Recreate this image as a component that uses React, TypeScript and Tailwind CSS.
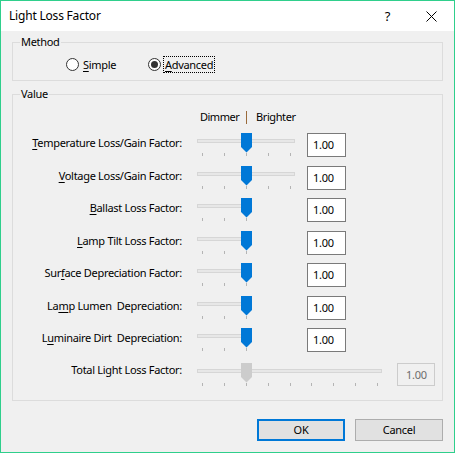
import React from "react";

const FONT = "font-['Noto_Sans',sans-serif]";

type RowDef = {
  pre: string;
  key: string;
  post: string;
  full: boolean;
  h: string;
};

const rows: RowDef[] = [
  { pre: "", key: "T", post: "emperature Loss/Gain Factor:", full: true, h: "h-[33px]" },
  { pre: "", key: "V", post: "oltage Loss/Gain Factor:", full: true, h: "h-[32px]" },
  { pre: "", key: "B", post: "allast Loss Factor:", full: false, h: "h-[33px]" },
  { pre: "", key: "L", post: "amp Tilt Loss Factor:", full: false, h: "h-[32px]" },
  { pre: "Sur", key: "f", post: "ace Depreciation Factor:", full: false, h: "h-[33px]" },
  { pre: "La", key: "m", post: "p Lumen  Depreciation:", full: false, h: "h-[32px]" },
  { pre: "L", key: "u", post: "minaire Dirt  Depreciation:", full: false, h: "h-[35px]" },
];

function Thumb({ disabled }: { disabled?: boolean }) {
  return (
    <svg width="11" height="20" viewBox="0 0 11 20" className="block">
      <path d="M0 0 H11 V14 L5.5 19.5 L0 14 Z" fill={disabled ? "#cccccc" : "#0078d7"} />
    </svg>
  );
}

function Slider({
  width,
  trackWidth,
  ticks,
  disabled,
}: {
  width: number;
  trackWidth: number;
  ticks: number[];
  disabled?: boolean;
}) {
  return (
    <div className="relative h-[24px] shrink-0" style={{ width }}>
      <div
        className="absolute left-0 top-[6px] h-[4px] border border-[#d6d6d6] bg-[#e7e7e7]"
        style={{ width: trackWidth }}
      />
      {ticks.map((x) => (
        <div key={x} className="absolute top-[20px] h-[3px] w-px bg-[#b4b4b4]" style={{ left: x }} />
      ))}
      <div className="absolute left-[44px] top-0">
        <Thumb disabled={disabled} />
      </div>
    </div>
  );
}

function Radio({ checked }: { checked?: boolean }) {
  return (
    <div className="flex h-[13px] w-[13px] shrink-0 items-center justify-center rounded-full border border-[#333333] bg-white">
      {checked && <div className="h-[7px] w-[7px] rounded-full bg-[#333333]" />}
    </div>
  );
}

export default function App() {
  const fullTicks = [5, 27, 49, 71, 93];
  const shortTicks = [5, 27, 49];
  const totalTicks = [5, 27, 49, 71, 93, 114, 136, 158, 180];

  return (
    <div
      className={`${FONT} flex h-[453px] w-[455px] flex-col border border-[#2fcf8c] bg-[#f0f0f0] text-[11px] tracking-[-0.3px] text-black`}
    >
      {/* title bar */}
      <div className="flex h-[30px] shrink-0 items-center bg-white pl-[8px]">
        <span className="text-[12px] leading-[16px] tracking-[-0.2px]">Light Loss Factor</span>
        <span className="ml-auto mr-[36px] text-[13px] leading-[16px]">?</span>
        <svg width="11" height="11" viewBox="0 0 11 11" className="mr-[17px]">
          <path d="M0.5 0.5 L10.5 10.5 M10.5 0.5 L0.5 10.5" stroke="#000" strokeWidth="1" />
        </svg>
      </div>

      <div className="flex flex-col px-[11px]">
        {/* Method group */}
        <div className="relative mt-[11px] h-[39px] border border-[#dcdcdc]">
          <span className="absolute left-[7px] top-[-8px] bg-[#f0f0f0] px-px leading-[14px]">Method</span>
          <div className="flex items-center pl-[53px] pt-[13px]">
            <div className="flex w-[82px] items-center">
              <Radio />
              <span className="ml-[4px] leading-[16px]">
                <u className="underline-offset-2">S</u>imple
              </span>
            </div>
            <Radio checked />
            <span className="ml-[2px] border border-dotted border-black pl-px pr-px leading-[15px]">
              <u className="underline-offset-2">A</u>dvanced
            </span>
          </div>
        </div>

        {/* Value group */}
        <div className="relative mt-[13px] h-[307px] border border-[#dcdcdc] pt-[14px]">
          <span className="absolute left-[7px] top-[-8px] bg-[#f0f0f0] px-px leading-[14px]">Value</span>
          <div className="flex h-[16px] items-center pl-[187px] leading-[16px]">
            <span className="w-[46px] tracking-[-0.5px]">Dimmer</span>
            <div className="h-[13px] w-px bg-[#9a6a3a]" />
            <span className="ml-[9px] tracking-[-0.4px]">Brighter</span>
          </div>

          <div className="mt-[8px] flex flex-col">
            {rows.map((r, i) => (
              <div key={i} className={`flex items-start ${r.h}`}>
                <div className="w-[169px] shrink-0 whitespace-pre text-right leading-[19px]">
                  {r.pre}
                  <u className="underline-offset-2">{r.key}</u>
                  {r.post}
                </div>
                <div className="ml-[15px]">
                  <Slider width={98} trackWidth={r.full ? 98 : 55} ticks={r.full ? fullTicks : shortTicks} />
                </div>
                <div className="ml-[12px] h-[24px] w-[39px] shrink-0 border border-[#7a7a7a] bg-white pl-[5px] leading-[22px]">
                  1.00
                </div>
              </div>
            ))}

            {/* total row (read only) */}
            <div className="flex h-[24px] items-start">
              <div className="w-[169px] shrink-0 text-right leading-[14px]">Total Light Loss Factor:</div>
              <div className="ml-[15px]">
                <Slider width={185} trackWidth={185} ticks={totalTicks} disabled />
              </div>
              <div className="ml-[15px] h-[23px] w-[38px] shrink-0 border border-[#cccccc] bg-[#f0f0f0] pl-[8px] leading-[21px] text-[#6d6d6d]">
                1.00
              </div>
            </div>
          </div>
        </div>

        {/* buttons */}
        <div className="mt-[18px] flex justify-end gap-[10px]">
          <button className="h-[22px] w-[88px] border-2 border-[#0078d7] bg-[#e1e1e1] leading-[18px]">OK</button>
          <button className="h-[22px] w-[88px] border border-[#adadad] bg-[#e1e1e1] leading-[20px]">Cancel</button>
        </div>
      </div>
    </div>
  );
}
